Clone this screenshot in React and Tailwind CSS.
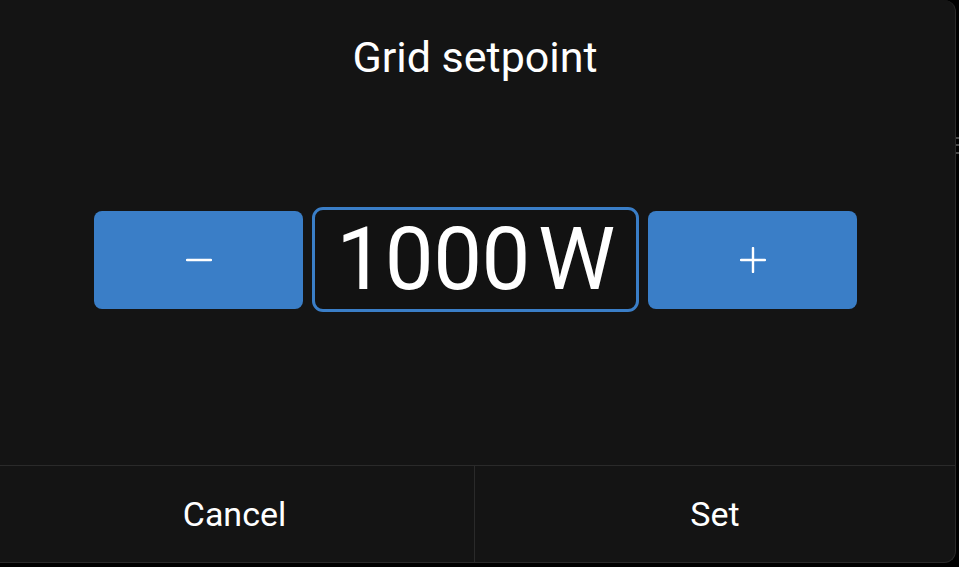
import React from "react";

const font = { fontFamily: "Roboto, 'Noto Sans', sans-serif" };

const StepButton = ({ children }) => (
  <button className="w-[209px] h-[98px] rounded-[8px] bg-[#3a7ec7] flex items-center justify-center">
    {children}
  </button>
);

const App = () => {
  return (
    <div
      className="relative w-[959px] h-[567px] overflow-hidden bg-black text-white"
      style={font}
    >
      <div className="ml-[-5px] w-[961px] h-[563px] flex flex-col bg-[#141414] border-r border-b border-[#2a2a2a] rounded-tr-[12px] rounded-br-[12px]">
        <div className="pt-[36px] text-center text-[43px] leading-none">
          Grid setpoint
        </div>

        <div className="flex-1">
          <div className="mt-[128px] flex items-center justify-center gap-[9px] pl-[1px]">
            <StepButton>
              <svg width="26" height="4" viewBox="0 0 26 4">
                <line x1="1" y1="2" x2="25" y2="2" stroke="white" strokeWidth="2.4" strokeLinecap="round" />
              </svg>
            </StepButton>
            <div className="w-[327px] h-[105px] rounded-[11px] border-[3px] border-[#3a7ec7] bg-[#121212] flex items-center justify-center">
              <span className="text-[87px] leading-none tracking-[-0.5px]">
                1000<span className="ml-[8px]">W</span>
              </span>
            </div>
            <StepButton>
              <svg width="26" height="26" viewBox="0 0 26 26">
                <line x1="1" y1="13" x2="25" y2="13" stroke="white" strokeWidth="2.4" strokeLinecap="round" />
                <line x1="13" y1="1" x2="13" y2="25" stroke="white" strokeWidth="2.4" strokeLinecap="round" />
              </svg>
            </StepButton>
          </div>
        </div>

        <div className="h-[97px] flex border-t border-[#2a2a2a]">
          <button className="w-[480px] border-r border-[#2a2a2a] flex items-center justify-center text-[34px]">
            Cancel
          </button>
          <button className="flex-1 flex items-center justify-center text-[34px]">
            Set
          </button>
        </div>
      </div>

      <div className="absolute left-[956px] top-[137px] w-[3px] h-[2px] bg-[#4a4a4a]" />
      <div className="absolute left-[956px] top-[144px] w-[3px] h-[2px] bg-[#4a4a4a]" />
      <div className="absolute left-[956px] top-[152px] w-[3px] h-[2px] bg-[#4a4a4a]" />
    </div>
  );
};

export default App;
